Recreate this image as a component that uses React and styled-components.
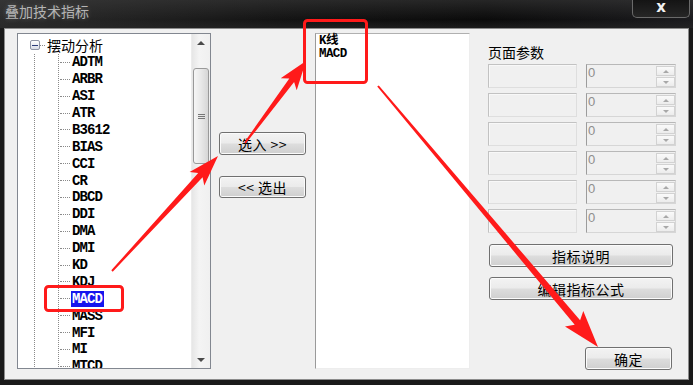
import React from "react";
import styled, { createGlobalStyle } from "styled-components";

const Global = createGlobalStyle`
  html, body { margin: 0; padding: 0; background: #161616; }
  * { box-sizing: border-box; }
`;

const CJK = `"Noto Sans CJK SC", "Noto Sans", sans-serif`;
const MONO = `"Liberation Mono", "Noto Sans CJK SC", monospace`;

const Win = styled.div`
  position: relative;
  width: 693px;
  height: 385px;
  overflow: hidden;
  display: flex;
  flex-direction: column;
  background: #1a1a1a;
  font-family: ${CJK};
`;

const TitleBar = styled.div`
  height: 28px;
  flex: none;
  display: flex;
  align-items: flex-start;
  background:
    linear-gradient(180deg, rgba(60,60,60,0.55) 0%, rgba(0,0,0,0) 70%, rgba(40,40,40,0.6) 100%),
    linear-gradient(90deg, #2c2c2c 0%, #141414 40%, #0b0b0b 70%, #1b1b1e 100%);
`;

const Title = styled.div`
  padding: 2px 0 0 5px;
  font-size: 14px;
  line-height: 18px;
  color: #b4b4b4;
  text-shadow: 0 0 5px rgba(255,255,255,0.25);
`;

const CloseBtn = styled.div`
  margin-left: auto;
  margin-right: 3px;
  width: 58px;
  height: 18px;
  border: 1px solid #6a6a6a;
  border-top: none;
  border-radius: 0 0 5px 5px;
  background: linear-gradient(#141414, #262626);
  color: #f2f2f2;
  font-family: "DejaVu Sans", sans-serif;
  font-weight: bold;
  font-size: 15px;
  line-height: 14px;
  display: flex;
  align-items: center;
  justify-content: center;
  padding-bottom: 3px;
`;

const Client = styled.div`
  flex: 1;
  min-height: 0;
  margin: 0 4px 5px 4px;
  border: 1px solid #8c8c8c;
  background: #f0f0f0;
  display: flex;
  align-items: stretch;
  padding: 4px 12px 10px 12px;
`;

const TreePane = styled.div`
  width: 194px;
  flex: none;
  min-height: 0;
  background: #fff;
  border: 1px solid #828790;
  display: flex;
  overflow: hidden;
`;

const TreeBody = styled.div`
  flex: 1;
  overflow: hidden;
  padding-top: 3px;
`;

const RootRow = styled.div`
  height: 16.9px;
  display: flex;
  align-items: center;
  padding-left: 12px;
`;

const Expander = styled.div`
  width: 10px;
  height: 10px;
  flex: none;
  border: 1px solid #8f95a6;
  border-radius: 2px;
  background: linear-gradient(#ffffff, #d9dde8);
  display: flex;
  align-items: center;
  justify-content: center;
  &::after {
    content: "";
    width: 6px;
    height: 1px;
    background: #2c3d7a;
  }
`;

const HConn = styled.span`
  flex: none;
  width: ${(p) => p.$w}px;
  height: 0;
  border-top: 1px dotted #8a8a8a;
  margin-right: ${(p) => p.$gap || 0}px;
`;

const RootLabel = styled.span`
  font-size: 14px;
  color: #000;
  line-height: 16px;
  white-space: nowrap;
`;

const Branch = styled.div`
  margin-left: 16px;
  border-left: 1px dotted #8a8a8a;
`;

const ChildList = styled.div`
  margin-left: 23px;
  border-left: 1px dotted #8a8a8a;
`;

const ChildRow = styled.div`
  height: 16.9px;
  display: flex;
  align-items: center;
  padding-left: 1px;
`;

const ItemLabel = styled.span`
  font-family: ${MONO};
  font-weight: bold;
  font-size: 14px;
  letter-spacing: -0.9px;
  line-height: 16px;
  padding: 0 2px 0 1px;
  color: ${(p) => (p.$sel ? "#fff" : "#000")};
  background: ${(p) => (p.$sel ? "#1515ee" : "transparent")};
  white-space: nowrap;
`;

const ScrollBar = styled.div`
  width: 19px;
  flex: none;
  display: flex;
  flex-direction: column;
  background: linear-gradient(90deg, #e6e6e6, #f4f4f4 40%, #f0f0f0);
  border-left: 1px solid #ececec;
`;

const ArrowBtn = styled.div`
  height: 17px;
  flex: none;
  display: flex;
  align-items: center;
  justify-content: center;
  &::after {
    content: "";
    border-left: 4px solid transparent;
    border-right: 4px solid transparent;
    ${(p) => (p.$down ? "border-top: 4px solid #4a4a4a;" : "border-bottom: 4px solid #4a4a4a;")}
  }
`;

const Track = styled.div`
  flex: 1;
  min-height: 0;
  padding: 0 1px;
`;

const Thumb = styled.div`
  height: ${(p) => p.$h}px;
  margin-top: ${(p) => p.$top}px;
  border: 1px solid #999;
  border-radius: 3px;
  background: linear-gradient(90deg, #f6f6f6, #e8e8e8 50%, #d6d6d6);
  display: flex;
  align-items: center;
  justify-content: center;
  &::after {
    content: "";
    width: 7px;
    height: 5px;
    background: repeating-linear-gradient(180deg, #777 0 1px, transparent 1px 2px);
  }
`;

const MiddleCol = styled.div`
  width: 87px;
  flex: none;
  margin-left: 8px;
  padding-top: 99px;
  display: flex;
  flex-direction: column;
  gap: 21px;
`;

const Button = styled.div`
  width: ${(p) => p.$w || "100%"};
  height: ${(p) => p.$h || 23}px;
  flex: none;
  border: 1px solid #707070;
  border-radius: 3px;
  background: linear-gradient(#f3f3f3 0%, #ebebeb 48%, #dddddd 52%, #cfcfcf 100%);
  box-shadow: inset 0 0 0 1px #fbfbfb;
  display: flex;
  align-items: center;
  justify-content: center;
  font-size: 14px;
  color: #000;
  white-space: pre;
  letter-spacing: 0.5px;
`;

const SelList = styled.div`
  width: 155px;
  flex: none;
  margin-left: 9px;
  background: #fff;
  border: 1px solid #a0a0a0;
  border-color: #b0b0b0 #ededed #ededed #9a9a9a;
  padding: 1px 3px;
`;

const SelItem = styled.div`
  font-family: ${MONO};
  font-weight: bold;
  font-size: 12.5px;
  letter-spacing: -0.6px;
  line-height: 13px;
  color: #000;
`;

const RightCol = styled.div`
  width: 188px;
  flex: none;
  margin-left: 18px;
  display: flex;
  flex-direction: column;
`;

const PanelLabel = styled.div`
  margin-top: 10px;
  height: 18px;
  font-size: 14px;
  line-height: 18px;
  color: #000;
  margin-bottom: 3px;
`;

const ParamRow = styled.div`
  height: 24px;
  margin-bottom: 5px;
  display: flex;
  gap: 9px;
`;

const NameBox = styled.div`
  width: 89px;
  border: 1px solid;
  border-color: #c2c2c2 #dedede #dedede #c2c2c2;
  box-shadow: inset 1px 1px 0 #f8f8f8;
  background: #f0f0f0;
`;

const ValueBox = styled.div`
  flex: 1;
  border: 1px solid;
  border-color: #b8b8b8 #d6d6d6 #d6d6d6 #9c9c9c;
  background: #f0f0f0;
  display: flex;
`;

const ValueText = styled.div`
  flex: 1;
  padding: 1px 0 0 1px;
  font-family: "Liberation Sans", sans-serif;
  font-size: 13px;
  line-height: 14px;
  color: #8e8e8e;
`;

const Spinner = styled.div`
  width: 19px;
  display: flex;
  flex-direction: column;
  gap: 1px;
  padding: 1px 0 0 0;
`;

const SpinBtn = styled.div`
  flex: 1;
  border: 1px solid #d2d2d2;
  background: linear-gradient(#fafafa, #ececec);
  display: flex;
  align-items: center;
  justify-content: center;
  &::after {
    content: "";
    border-left: 3px solid transparent;
    border-right: 3px solid transparent;
    ${(p) => (p.$down ? "border-top: 3px solid #a8a8a8;" : "border-bottom: 3px solid #a8a8a8;")}
  }
`;

const ButtonStack = styled.div`
  margin-top: 6px;
  margin-left: 1px;
  width: 184px;
  display: flex;
  flex-direction: column;
  gap: 10px;
`;

const OkRow = styled.div`
  margin-top: auto;
  display: flex;
  justify-content: flex-end;
  padding-right: 4px;
  margin-bottom: -1px;
`;

const Overlay = styled.svg`
  position: absolute;
  left: 0;
  top: 0;
  pointer-events: none;
`;

function arrowPoints([x1, y1], [x2, y2], headLen, headW, tailW, neckW) {
  const dx = x2 - x1, dy = y2 - y1;
  const len = Math.hypot(dx, dy);
  const ux = dx / len, uy = dy / len;
  const nx = -uy, ny = ux;
  const bx = x2 - ux * headLen, by = y2 - uy * headLen;
  const sx = bx - ux * 5, sy = by - uy * 5;
  const pts = [
    [x1 + nx * tailW / 2, y1 + ny * tailW / 2],
    [bx + nx * neckW / 2, by + ny * neckW / 2],
    [sx + nx * headW, sy + ny * headW],
    [x2, y2],
    [sx - nx * headW, sy - ny * headW],
    [bx - nx * neckW / 2, by - ny * neckW / 2],
    [x1 - nx * tailW / 2, y1 - ny * tailW / 2],
  ];
  return pts.map((p) => p.map((v) => v.toFixed(1)).join(",")).join(" ");
}

const items = ["ADTM","ARBR","ASI","ATR","B3612","BIAS","CCI","CR","DBCD","DDI","DMA","DMI","KD","KDJ","MACD","MASS","MFI","MI","MTCD"];

export default function App() {
  const RED = "#ff1a1a";
  return (
    <>
      <Global />
      <Win>
        <TitleBar>
          <Title>叠加技术指标</Title>
          <CloseBtn>x</CloseBtn>
        </TitleBar>
        <Client>
          <TreePane>
            <TreeBody>
              <RootRow>
                <Expander />
                <HConn $w={5} $gap={2} />
                <RootLabel>摆动分析</RootLabel>
              </RootRow>
              <Branch>
                <ChildList>
                  {items.map((it) => (
                    <ChildRow key={it}>
                      <HConn $w={10} $gap={1} />
                      <ItemLabel $sel={it === "MACD"}>{it}</ItemLabel>
                    </ChildRow>
                  ))}
                </ChildList>
              </Branch>
            </TreeBody>
            <ScrollBar>
              <ArrowBtn />
              <Track>
                <Thumb $top={17} $h={96} />
              </Track>
              <ArrowBtn $down />
            </ScrollBar>
          </TreePane>

          <MiddleCol>
            <Button $h={23}>{"选入 >>"}</Button>
            <Button $h={22}>{"<< 选出"}</Button>
          </MiddleCol>

          <SelList>
            <SelItem>K线</SelItem>
            <SelItem>MACD</SelItem>
          </SelList>

          <RightCol>
            <PanelLabel>页面参数</PanelLabel>
            {[0, 1, 2, 3, 4, 5].map((i) => (
              <ParamRow key={i}>
                <NameBox />
                <ValueBox>
                  <ValueText>0</ValueText>
                  <Spinner>
                    <SpinBtn />
                    <SpinBtn $down />
                  </Spinner>
                </ValueBox>
              </ParamRow>
            ))}
            <ButtonStack>
              <Button>指标说明</Button>
              <Button>编辑指标公式</Button>
            </ButtonStack>
            <OkRow>
              <Button $w="87px">确定</Button>
            </OkRow>
          </RightCol>
        </Client>

        <Overlay width="693" height="385" viewBox="0 0 693 385">
          <rect x="304.5" y="20.5" width="62" height="62" rx="3" fill="none" stroke={RED} strokeWidth="3" />
          <rect x="45.5" y="286.5" width="77" height="24" rx="3" fill="none" stroke={RED} strokeWidth="3" />
          <polygon points={arrowPoints([112, 271], [218, 156], 26, 10, 2, 6)} fill={RED} />
          <polygon points={arrowPoints([245, 143], [306, 61], 24, 10, 2, 6)} fill={RED} />
          <polygon points={arrowPoints([378, 86], [598, 347], 32, 12, 2, 7)} fill={RED} />
        </Overlay>
      </Win>
    </>
  );
}
